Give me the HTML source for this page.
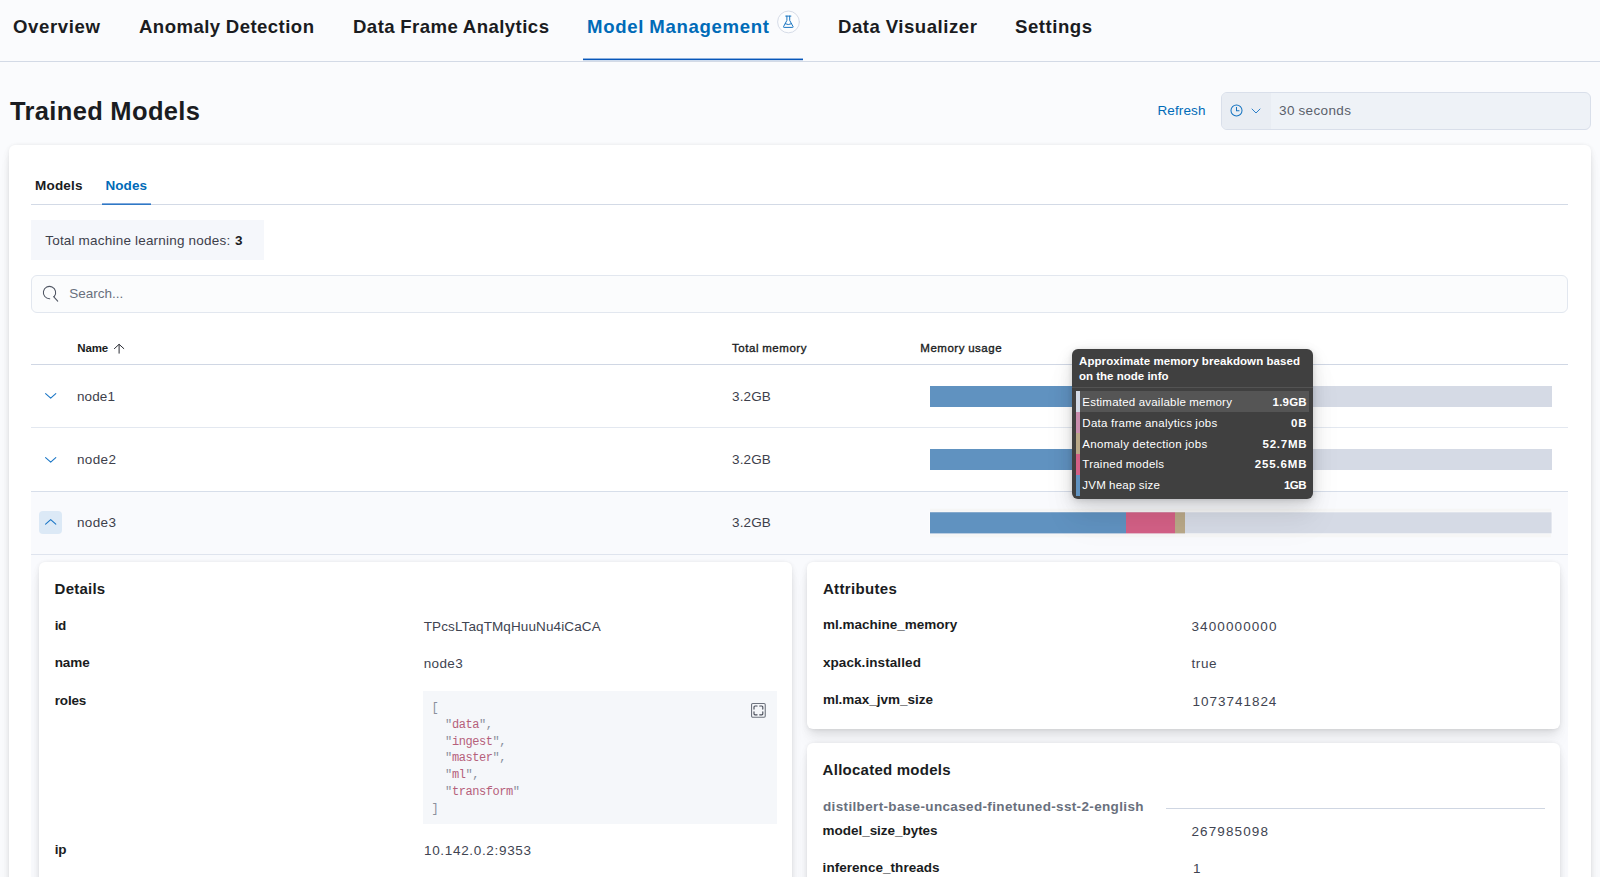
<!DOCTYPE html>
<html lang="en">
<head>
<meta charset="utf-8">
<title>Trained Models - Machine Learning</title>
<style>
html,body{margin:0;padding:0}
body{width:1600px;height:877px;overflow:hidden;position:relative;background:#fafbfd;font-family:"Liberation Sans",sans-serif;color:#1a1c21}
.a{position:absolute}
.t{position:absolute;white-space:pre;line-height:1;font-family:"Liberation Sans",sans-serif}
.panel{position:absolute;background:#fff;border-radius:6px;box-shadow:0 .9px 4px -1px rgba(0,0,0,.08),0 2.6px 8px -1px rgba(0,0,0,.06),0 5.7px 12px -1px rgba(0,0,0,.05),0 15px 15px -1px rgba(0,0,0,.04)}
.hl{position:absolute;height:1px;background:#d3dae6}
svg{position:absolute;overflow:visible}
.p{color:#8a909c}
</style>
</head>
<body>

<!-- ===== top navigation tabs ===== -->
<div class="hl" style="left:0;top:61px;width:1600px"></div>
<div class="a" style="left:583px;top:58px;width:220px;height:3px;background:linear-gradient(#8db1df 0,#8db1df 1px,#0757ba 1px,#0757ba 2px,#cfdcee 2px)"></div>
<!-- beta beaker badge -->
<svg style="left:772px;top:6px" width="32" height="32" viewBox="0 0 32 32" fill="none" stroke="#0f6fbe" stroke-width=".95" stroke-linecap="round" stroke-linejoin="round">
  <circle cx="16.5" cy="15.950" r="10.900" fill="#fcfdfe" stroke="#d6dce8" stroke-width="1"/>
  <path d="M13.7 10.1h5.2M14.9 10.1v4.3l-3.3 6.1a.6.6 0 0 0 .5.9h8.4a.6.6 0 0 0 .5-.9l-3.3-6.100v-4.3M13.300 17.800q3.100 1.700 6 0"/>
</svg>

<!-- ===== refresh interval control ===== -->
<div class="a" style="left:1221px;top:91.5px;width:368px;height:36px;border:1px solid #d9dfea;border-radius:6px;background:#eef2f7;overflow:hidden">
  <div class="a" style="left:0;top:0;width:49px;height:36px;background:#e9edf3"></div>
</div>
<svg style="left:1230px;top:104.4px" width="13" height="13" viewBox="0 0 16 16" fill="none" stroke="#1473c0" stroke-width="1.25">
  <circle cx="8" cy="8" r="6.8"/><path d="M8 3.6V8.4h3.6"/>
</svg>
<svg style="left:1251px;top:108px" width="10" height="6" viewBox="0 0 10 6" fill="none" stroke="#2a7fca" stroke-width="1" stroke-linecap="round" stroke-linejoin="round">
  <path d="M1 1l4 4 4-4"/>
</svg>

<!-- ===== main white panel ===== -->
<div class="panel" style="left:9px;top:144.6px;width:1582px;height:760px"></div>

<!-- inner tabs -->
<div class="hl" style="left:31.3px;top:204px;width:1536.7px"></div>
<div class="a" style="left:101.8px;top:203px;width:49px;height:2px;background:linear-gradient(#7fa9dd 0,#7fa9dd 1px,#2f79c5 1px)"></div>

<!-- stats bar -->
<div class="a" style="left:31.3px;top:220px;width:232.7px;height:39.6px;background:#f5f7fb"></div>

<!-- search box -->
<div class="a" style="left:31.3px;top:275px;width:1534.7px;height:36px;border:1px solid #e2e7ef;border-radius:6px;background:#fbfcfd"></div>
<svg style="left:38px;top:281px" width="24" height="24" viewBox="0 0 24 24" fill="none" stroke="#505663" stroke-width="1.08" stroke-linecap="round">
  <path d="M11.7 17.700A6.150 6.150 0 1 1 16.350 15.340M15.600 15.600L19.700 20.200"/>
</svg>

<!-- ===== table ===== -->
<div class="a" style="left:31.3px;top:364px;width:1536.7px;height:1.3px;background:#d0d7e4"></div>
<div class="hl" style="left:31.3px;top:427.2px;width:1536.7px;background:#e3e8f0"></div>
<div class="hl" style="left:31.3px;top:491px;width:1536.7px;background:#d7deea"></div>
<!-- expanded row background -->
<div class="a" style="left:31.3px;top:492px;width:1536.7px;height:400px;background:#f9fafd"></div>
<div class="hl" style="left:31.3px;top:554.2px;width:1536.7px;background:#dfe4ee"></div>

<!-- sort arrow -->
<svg style="left:113px;top:343px" width="12" height="12" viewBox="0 0 12 12" fill="none" stroke="#2a2d35" stroke-width="1" stroke-linecap="round" stroke-linejoin="round">
  <path d="M6.1 10.2V1.500M1.400 5.600L6.100 1.300l4.700 4.300"/>
</svg>

<!-- row chevrons -->
<svg style="left:44.7px;top:393.3px" width="11.4" height="5.8" viewBox="0 0 11.4 5.8" fill="none" stroke="#1a76c6" stroke-width="1.1" stroke-linecap="round" stroke-linejoin="round"><path d="M.6 .6l5.100 4.600L10.800 .600"/></svg>
<svg style="left:44.7px;top:456.6px" width="11.4" height="5.8" viewBox="0 0 11.4 5.8" fill="none" stroke="#1a76c6" stroke-width="1.1" stroke-linecap="round" stroke-linejoin="round"><path d="M.6 .6l5.100 4.600L10.800 .600"/></svg>
<div class="a" style="left:39px;top:511px;width:23px;height:23px;border-radius:4px;background:#dce9f6"></div>
<svg style="left:44.7px;top:519.3px" width="11.4" height="5.8" viewBox="0 0 11.4 5.8" fill="none" stroke="#1a76c6" stroke-width="1.1" stroke-linecap="round" stroke-linejoin="round"><path d="M.6 5.200L5.700 .600l5.100 4.600"/></svg>

<!-- memory bars -->
<div class="a" style="left:930px;top:386px;width:621.6px;height:21px;background:#d5dae5"><div class="a" style="left:0;top:0;width:196px;height:21px;background:#6092c0"></div></div>
<div class="a" style="left:930px;top:449px;width:621.6px;height:21px;background:#d5dae5"><div class="a" style="left:0;top:0;width:196px;height:21px;background:#6092c0"></div></div>
<svg style="left:925px;top:505px" width="632" height="36" viewBox="925 505 632 36" shape-rendering="geometricPrecision">
  <rect x="930" y="508.8" width="621" height="28.400" fill="#f6f6f6"/>
  <rect x="929.3" y="511.600" width="623" height="22.500" fill="#fff" fill-opacity=".65"/>
  <rect x="930" y="512.300" width="621.600" height="21.050" fill="#d5dae5"/>
  <rect x="930" y="512.300" width="196" height="21.050" fill="#6092c0"/>
  <rect x="1126" y="512.300" width="49" height="21.050" fill="#d36086"/>
  <rect x="1175" y="512.300" width="10" height="21.050" fill="#b9a888"/>
</svg>

<!-- ===== tooltip ===== -->
<div class="a" style="left:1072px;top:349.3px;width:241px;height:149.6px;border-radius:6px;background:#404040;box-shadow:0 1px 5px rgba(0,0,0,.1),0 3.6px 13px rgba(0,0,0,.09),0 8.4px 23px rgba(0,0,0,.07),0 23px 35px rgba(0,0,0,.05)">
  <div class="a" style="left:0;top:38px;width:241px;height:1px;background:#535353"></div>
  <div class="a" style="left:7px;top:42px;width:230px;height:21px;background:#555"></div>
  <div class="a" style="left:4px;top:42px;width:4px;height:21px;background:#d3dae6"></div>
  <div class="a" style="left:4px;top:63px;width:4px;height:21px;background:#ca8eae"></div>
  <div class="a" style="left:4px;top:84px;width:4px;height:21px;background:#b9a888"></div>
  <div class="a" style="left:4px;top:105px;width:4px;height:21px;background:#d36086"></div>
  <div class="a" style="left:4px;top:126px;width:4px;height:21px;background:#6092c0"></div>
</div>

<!-- ===== expanded details ===== -->
<div class="panel" style="left:39px;top:562px;width:753px;height:340px"></div>
<div class="panel" style="left:807px;top:562px;width:753px;height:166.8px"></div>
<div class="panel" style="left:807px;top:743px;width:753px;height:160px"></div>

<!-- code block -->
<div class="a" style="left:423px;top:691px;width:354px;height:133.4px;background:#f5f7fa"></div>
<svg style="left:750.9px;top:702.8px" width="15" height="15" viewBox="0 0 15 15" fill="none" stroke-linecap="round">
  <rect x=".55" y=".55" width="13.7" height="13.7" rx="1.2" stroke="#6e737e" stroke-width="1.1"/>
  <path stroke="#4a4f5b" stroke-width="1.15" d="M3 6.100V4a1 1 0 0 1 1-1h2.100M8.700 3h2.100a1 1 0 0 1 1 1v2.100M11.800 8.700v2.100a1 1 0 0 1-1 1H8.700M6.100 11.800H4a1 1 0 0 1-1-1V8.700"/>
</svg>

<pre class="a" style="left:431.6px;top:699.8px;margin:0;font-family:'Liberation Mono',monospace;font-size:12px;letter-spacing:-.45px;line-height:16.875px;color:#b5607a"><span class="p">[</span>
  <span class="p">"</span>data<span class="p">",</span>
  <span class="p">"</span>ingest<span class="p">",</span>
  <span class="p">"</span>master<span class="p">",</span>
  <span class="p">"</span>ml<span class="p">",</span>
  <span class="p">"</span>transform<span class="p">"</span>
<span class="p">]</span></pre>

<!-- allocated model rule -->
<div class="hl" style="left:1166px;top:808px;width:379px;background:#cfd6e2"></div>

<span class="t" style="left:13px;top:18.05px;font-size:18.6px;font-weight:700;color:#1a1c21;letter-spacing:0.614px;">Overview</span>
<span class="t" style="left:139px;top:18.05px;font-size:18.6px;font-weight:700;color:#1a1c21;letter-spacing:0.440px;word-spacing:-0.440px;">Anomaly Detection</span>
<span class="t" style="left:353px;top:18.05px;font-size:18.6px;font-weight:700;color:#1a1c21;letter-spacing:0.445px;word-spacing:-0.445px;">Data Frame Analytics</span>
<span class="t" style="left:587px;top:18.05px;font-size:18.6px;font-weight:700;color:#006bb8;letter-spacing:0.676px;word-spacing:-0.676px;">Model Management</span>
<span class="t" style="left:838px;top:18.05px;font-size:18.6px;font-weight:700;color:#1a1c21;letter-spacing:0.542px;word-spacing:-0.542px;">Data Visualizer</span>
<span class="t" style="left:1015px;top:18.05px;font-size:18.6px;font-weight:700;color:#1a1c21;letter-spacing:0.520px;">Settings</span>
<span class="t" style="left:10px;top:98.81px;font-size:25.5px;font-weight:700;color:#1a1c21;letter-spacing:0.365px;word-spacing:-0.365px;">Trained Models</span>
<span class="t" style="left:1157.5px;top:103.67px;font-size:13.5px;color:#006bb8;letter-spacing:0.120px;">Refresh</span>
<span class="t" style="left:1279px;top:103.67px;font-size:13.5px;color:#5a606b;letter-spacing:0.367px;word-spacing:-0.367px;">30 seconds</span>
<span class="t" style="left:35px;top:179.27px;font-size:13.5px;font-weight:700;color:#1a1c21;letter-spacing:0.197px;">Models</span>
<span class="t" style="left:105.5px;top:179.27px;font-size:13.5px;font-weight:700;color:#006bb8;letter-spacing:0.059px;">Nodes</span>
<span class="t" style="left:45.2px;top:234.07px;font-size:13.5px;color:#3d404b;letter-spacing:0.225px;word-spacing:-0.225px;">Total machine learning nodes:</span>
<span class="t" style="left:235px;top:234.07px;font-size:13.5px;font-weight:700;color:#1a1c21;">3</span>
<span class="t" style="left:69.2px;top:286.57px;font-size:13.5px;color:#69707d;letter-spacing:-0.004px;">Search...</span>
<span class="t" style="left:77.2px;top:343.16px;font-size:11.5px;font-weight:700;color:#1a1c21;letter-spacing:-0.109px;">Name</span>
<span class="t" style="left:732px;top:343.16px;font-size:11.5px;color:#1a1c21;letter-spacing:0.547px;word-spacing:-0.547px;-webkit-text-stroke:0.35px #1a1c21;">Total memory</span>
<span class="t" style="left:920.3px;top:343.16px;font-size:11.5px;color:#1a1c21;letter-spacing:0.524px;word-spacing:-0.524px;-webkit-text-stroke:0.35px #1a1c21;">Memory usage</span>
<span class="t" style="left:77px;top:390.07px;font-size:13.5px;color:#3d404b;letter-spacing:0.113px;">node1</span>
<span class="t" style="left:732px;top:390.07px;font-size:13.5px;color:#3d404b;letter-spacing:0.130px;">3.2GB</span>
<span class="t" style="left:77px;top:452.57px;font-size:13.5px;color:#3d404b;letter-spacing:0.363px;">node2</span>
<span class="t" style="left:732px;top:452.57px;font-size:13.5px;color:#3d404b;letter-spacing:0.130px;">3.2GB</span>
<span class="t" style="left:77px;top:515.57px;font-size:13.5px;color:#3d404b;letter-spacing:0.363px;">node3</span>
<span class="t" style="left:732px;top:515.57px;font-size:13.5px;color:#3d404b;letter-spacing:0.130px;">3.2GB</span>
<span class="t" style="left:1079px;top:356.46px;font-size:11.5px;font-weight:700;color:#ffffff;letter-spacing:0.081px;word-spacing:-0.081px;">Approximate memory breakdown based</span>
<span class="t" style="left:1079px;top:371.36px;font-size:11.5px;font-weight:700;color:#ffffff;letter-spacing:0.005px;word-spacing:-0.005px;">on the node info</span>
<span class="t" style="left:1082.3px;top:397.46px;font-size:11.5px;color:#ffffff;letter-spacing:0.224px;word-spacing:-0.224px;">Estimated available memory</span>
<span class="t" style="left:1082.3px;top:418.16px;font-size:11.5px;color:#ffffff;letter-spacing:0.280px;word-spacing:-0.280px;">Data frame analytics jobs</span>
<span class="t" style="left:1082.3px;top:438.96px;font-size:11.5px;color:#ffffff;letter-spacing:0.321px;word-spacing:-0.321px;">Anomaly detection jobs</span>
<span class="t" style="left:1082.3px;top:459.46px;font-size:11.5px;color:#ffffff;letter-spacing:0.246px;word-spacing:-0.246px;">Trained models</span>
<span class="t" style="left:1082.3px;top:480.26px;font-size:11.5px;color:#ffffff;letter-spacing:0.206px;word-spacing:-0.206px;">JVM heap size</span>
<span class="t" style="left:1272.6px;top:397.46px;font-size:11.5px;font-weight:700;color:#ffffff;letter-spacing:0.188px;">1.9GB</span>
<span class="t" style="left:1291px;top:418.16px;font-size:11.5px;font-weight:700;color:#ffffff;letter-spacing:0.797px;">0B</span>
<span class="t" style="left:1262.6px;top:438.96px;font-size:11.5px;font-weight:700;color:#ffffff;letter-spacing:0.744px;">52.7MB</span>
<span class="t" style="left:1254.8px;top:459.46px;font-size:11.5px;font-weight:700;color:#ffffff;letter-spacing:0.838px;">255.6MB</span>
<span class="t" style="left:1283.9px;top:480.26px;font-size:11.5px;font-weight:700;color:#ffffff;letter-spacing:-0.528px;">1GB</span>
<span class="t" style="left:54.6px;top:581.20px;font-size:15px;font-weight:700;color:#1a1c21;letter-spacing:0.233px;">Details</span>
<span class="t" style="left:54.7px;top:618.67px;font-size:13.5px;font-weight:700;color:#1a1c21;letter-spacing:-0.500px;">id</span>
<span class="t" style="left:54.7px;top:655.77px;font-size:13.5px;font-weight:700;color:#1a1c21;letter-spacing:-0.094px;">name</span>
<span class="t" style="left:54.7px;top:693.57px;font-size:13.5px;font-weight:700;color:#1a1c21;letter-spacing:-0.145px;">roles</span>
<span class="t" style="left:54.7px;top:842.57px;font-size:13.5px;font-weight:700;color:#1a1c21;letter-spacing:-0.200px;">ip</span>
<span class="t" style="left:423.7px;top:619.57px;font-size:13.5px;color:#404451;letter-spacing:0.115px;">TPcsLTaqTMqHuuNu4iCaCA</span>
<span class="t" style="left:423.7px;top:657.17px;font-size:13.5px;color:#404451;letter-spacing:0.363px;">node3</span>
<span class="t" style="left:424px;top:843.57px;font-size:13.5px;color:#404451;letter-spacing:0.672px;">10.142.0.2:9353</span>
<span class="t" style="left:822.9px;top:581.20px;font-size:15px;font-weight:700;color:#1a1c21;letter-spacing:0.351px;">Attributes</span>
<span class="t" style="left:822.9px;top:618.17px;font-size:13.5px;font-weight:700;color:#1a1c21;letter-spacing:0.005px;">ml.machine_memory</span>
<span class="t" style="left:822.9px;top:656.17px;font-size:13.5px;font-weight:700;color:#1a1c21;letter-spacing:0.086px;">xpack.installed</span>
<span class="t" style="left:822.9px;top:693.47px;font-size:13.5px;font-weight:700;color:#1a1c21;letter-spacing:-0.016px;">ml.max_jvm_size</span>
<span class="t" style="left:1191.5px;top:619.57px;font-size:13.5px;color:#404451;letter-spacing:1.101px;">3400000000</span>
<span class="t" style="left:1191.5px;top:657.47px;font-size:13.5px;color:#404451;letter-spacing:0.578px;">true</span>
<span class="t" style="left:1192.4px;top:695.37px;font-size:13.5px;color:#404451;letter-spacing:0.990px;">1073741824</span>
<span class="t" style="left:822.6px;top:762.10px;font-size:15px;font-weight:700;color:#1a1c21;letter-spacing:0.271px;word-spacing:-0.271px;">Allocated models</span>
<span class="t" style="left:823px;top:800.37px;font-size:13.5px;font-weight:700;color:#69707d;letter-spacing:0.347px;">distilbert-base-uncased-finetuned-sst-2-english</span>
<span class="t" style="left:822.6px;top:823.77px;font-size:13.5px;font-weight:700;color:#1a1c21;letter-spacing:-0.037px;">model_size_bytes</span>
<span class="t" style="left:822.6px;top:860.97px;font-size:13.5px;font-weight:700;color:#1a1c21;letter-spacing:0.043px;">inference_threads</span>
<span class="t" style="left:1191.5px;top:824.87px;font-size:13.5px;color:#404451;letter-spacing:1.115px;">267985098</span>
<span class="t" style="left:1193px;top:862.17px;font-size:13.5px;color:#404451;">1</span>
</body>
</html>
